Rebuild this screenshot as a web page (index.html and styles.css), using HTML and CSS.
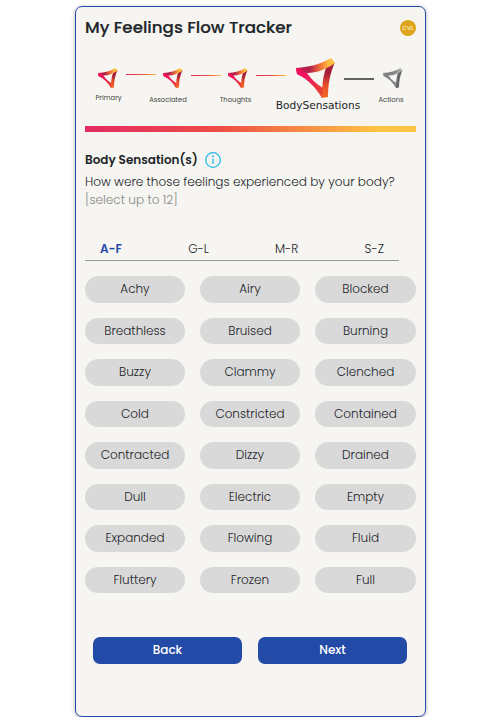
FILE: index.html
```html
<!DOCTYPE html>
<html lang="en">
<head>
<meta charset="utf-8">
<title>My Feelings Flow Tracker</title>
<link rel="stylesheet" href="styles.css">
</head>
<body>
<svg class="defs" aria-hidden="true">
  <defs>
    <linearGradient id="top" x1="0" y1="0" x2="1" y2="0"><stop offset="0" stop-color="#d51b50"/><stop offset=".35" stop-color="#b0204a"/><stop offset=".6" stop-color="#ee6938"/><stop offset=".85" stop-color="#ffc040"/></linearGradient>
    <linearGradient id="left" x1="0" y1="0" x2="1" y2="1"><stop offset="0" stop-color="#f0105f"/><stop offset=".45" stop-color="#ed1c59"/><stop offset="1" stop-color="#e64b28"/></linearGradient>
    <linearGradient id="right" x1="0" y1="0" x2="0" y2="1"><stop offset="0" stop-color="#a61c3b"/><stop offset=".3" stop-color="#a61c3b"/><stop offset=".65" stop-color="#e84e2b"/><stop offset="1" stop-color="#f36b24"/></linearGradient>
    <linearGradient id="gray" x1="0" y1="0" x2="1" y2="0"><stop offset="0" stop-color="#777"/><stop offset=".6" stop-color="#888"/><stop offset="1" stop-color="#bbb"/></linearGradient>
    <symbol id="flow" viewBox="0 0 40 40">
      <path fill="url(#right)" d="M39 4C34 15 32 27 32 39L26 40C26 28 27 18 30 10Z"/>
      <path fill="url(#left)" d="M0 10 8 12 11 15C15 21 20 26 27 30L26 40C20 30 12 21 1 16Z"/>
      <path fill="url(#top)" d="M0 10C14 9 25 6 35 0L39 5C31 11 21 15 11 15Z"/>
      <path fill="#f0105f" d="M0 10 11 15 9 20 1 16Z"/>
    </symbol>
    <symbol id="flow-gray" viewBox="0 0 40 40">
      <path fill="#666" d="M39 4C34 15 32 27 32 39L26 40C26 28 27 18 30 10Z"/>
      <path fill="#858585" d="M0 10 8 12 11 15C15 21 20 26 27 30L26 40C20 30 12 21 1 16Z"/>
      <path fill="url(#gray)" d="M0 10C14 9 25 6 35 0L39 5C31 11 21 15 11 15Z"/>
    </symbol>
  </defs>
</svg>
<main class="card">
  <header class="header"><h1>My Feelings Flow Tracker</h1><span class="avatar">CVL</span></header>
  <nav class="steps">
    <div class="step primary"><svg><use href="#flow"/></svg><span>Primary</span></div>
    <i class="line first"></i>
    <div class="step associated"><svg><use href="#flow"/></svg><span>Associated</span></div>
    <i class="line"></i>
    <div class="step thoughts"><svg><use href="#flow"/></svg><span>Thoughts</span></div>
    <i class="line"></i>
    <div class="step current"><svg><use href="#flow"/></svg><span>BodySensations</span></div>
    <i class="line pending"></i>
    <div class="step actions"><svg><use href="#flow-gray"/></svg><span>Actions</span></div>
  </nav>
  <div class="bar"></div>
  <section class="intro">
    <h2><span>Body Sensation(s)</span><svg class="info" viewBox="0 0 16 16"><circle cx="8" cy="8" r="7.3"/><path d="M8 6.5v5.5"/><circle class="dot" cx="8" cy="4.3" r="1"/></svg></h2>
    <p class="question">How were those feelings experienced by your body?</p>
    <p class="hint">[select up to 12]</p>
  </section>
  <nav class="tabs"><span class="active">A-F</span><span>G-L</span><span>M-R</span><span>S-Z</span></nav>
  <div class="pills">
    <span>Achy</span><span>Airy</span><span>Blocked</span>
    <span>Breathless</span><span>Bruised</span><span>Burning</span>
    <span>Buzzy</span><span>Clammy</span><span>Clenched</span>
    <span>Cold</span><span>Constricted</span><span>Contained</span>
    <span>Contracted</span><span>Dizzy</span><span>Drained</span>
    <span>Dull</span><span>Electric</span><span>Empty</span>
    <span>Expanded</span><span>Flowing</span><span>Fluid</span>
    <span>Fluttery</span><span>Frozen</span><span>Full</span>
  </div>
  <div class="buttons"><button>Back</button><button>Next</button></div>
</main>
</body>
</html>
```
FILE: styles.css
```css
* { box-sizing: border-box; }
body { margin: 0; background: #fff; font-family: Poppins, Inter, sans-serif; color: #212529; }
.defs { position: absolute; width: 0; height: 0; }
.card { width: 351px; height: 711px; margin: 6px 0 0 75px; padding: 0 9px; border: 1px solid #244aa8; border-radius: 7px; background: #f6f5f1; box-shadow: 0 1px 4px rgba(0,0,0,.3); overflow: hidden; }
.header { display: flex; justify-content: space-between; height: 44px; padding-top: 10px; }
h1 { margin: 0; font-size: 16.7px; line-height: 21px; font-weight: 500; white-space: nowrap; -webkit-text-stroke: .2px #212529; }
.avatar { width: 16px; height: 16px; margin-top: 3px; border-radius: 50%; background: #dca51c; color: #fff0c5; font-size: 6px; font-weight: 500; line-height: 16px; text-align: center; }
.steps { display: grid; grid-template-columns: 41px 30px 35px 30px 35px 30px 58px 30px 42px; height: 75px; padding-top: 7px; }
.step { display: flex; flex-direction: column; align-items: center; padding-top: 10px; white-space: nowrap; font-size: 6.8px; line-height: 10px; color: #444; }
.step svg { width: 20px; height: 20px; flex: none; }
.step span { margin-top: 7px; }
.primary { padding-left: 6px; }
.primary svg { margin-right: 1px; }
.primary span { margin-top: 5px; }
.associated svg { margin-right: 1px; }
.associated span { margin-right: 11px; }
.thoughts { padding-left: 1px; }
.thoughts svg { margin-right: 2px; }
.thoughts span { margin-right: 7px; }
.current { padding-top: 0; font-family: "DejaVu Sans", sans-serif; font-size: 10.6px; line-height: 14px; color: #212529; }
.current svg { width: 40px; height: 40px; margin-left: 1px; }
.current span { margin-top: 0; margin-left: 6px; }
.actions { padding-right: 4px; }
.actions span { margin-right: 4px; }
.line { height: 1px; margin-top: 17px; background: linear-gradient(90deg, #e8285e, #e84a48 50%, #fdb83f); }
.line.first { margin-top: 16px; }
.line.pending { height: 2px; margin-top: 20px; background: #626163; }
.bar { height: 6px; background: linear-gradient(90deg, #e22c62, #ee4c46 40%, #ffc344 88%); }
.intro { height: 103px; padding-top: 20px; }
h2 { display: flex; align-items: center; gap: 7px; margin: 0; height: 16px; font-size: 12px; font-weight: 600; white-space: nowrap; }
.info { width: 16px; height: 16px; fill: none; stroke: #25b7ed; stroke-width: 1.3; }
.info .dot { fill: #25b7ed; stroke: none; }
p { margin: 0; font-size: 12.07px; line-height: 18px; font-weight: 300; white-space: nowrap; }
.question { margin-top: 5px; }
.hint { color: #888; }
.tabs { display: flex; justify-content: space-between; width: 314px; height: 26px; padding: 5px 15px 0; border-bottom: 1px solid #999; font-size: 12px; line-height: 18px; font-weight: 300; }
.tabs span { margin-left: -1px; }
.tabs .active { margin-left: 0; color: #244aa8; font-weight: 600; }
.pills { display: grid; grid-template-columns: 100px 100px 101px; gap: 14.95px 15px; margin-top: 15px; }
.pills span { height: 26.6px; border-radius: 14px; background: #d9d9d9; text-align: center; font-size: 12px; line-height: 26.9px; font-weight: 300; }
.buttons { display: flex; gap: 16px; margin-top: 43.5px; padding: 0 9px 0 8px; }
button { flex: 1; height: 27px; padding: 0; border: 0; border-radius: 7px; background: #244aa8; color: #fff; font: 500 12px/26px Poppins, Inter, sans-serif; }
```
